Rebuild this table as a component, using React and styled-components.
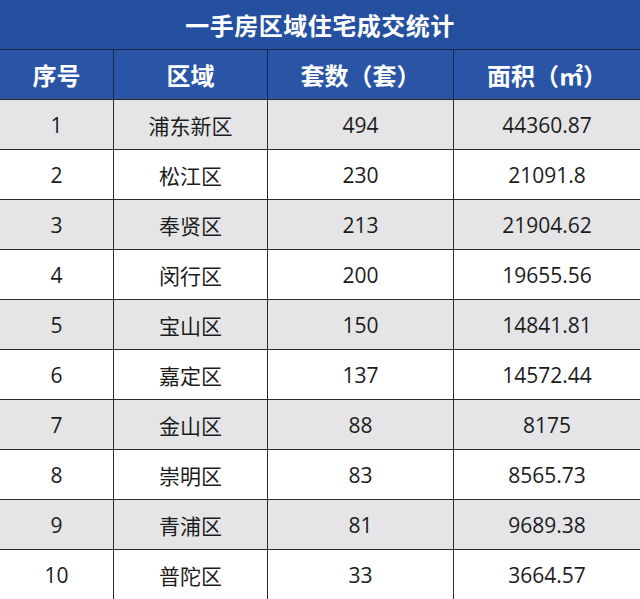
import React from 'react'
import styled, { createGlobalStyle } from 'styled-components'

const Global = createGlobalStyle`
  body {
    margin: 0;
    background: #fff;
    font-family: "Open Sans", "Noto Sans CJK SC", sans-serif;
  }
`

const Sheet = styled.section`
  width: 640px;
  height: 599px;
  overflow: hidden;
`

const Title = styled.h1`
  margin: 0;
  height: 49px;
  display: flex;
  align-items: center;
  justify-content: center;
  background: #2550a0;
  color: #fff;
  font-family: "Noto Sans CJK SC", sans-serif;
  font-size: 24px;
  font-weight: 700;
  letter-spacing: 0.5px;
`

const Row = styled.div`
  display: grid;
  grid-template-columns: 113px 154px 186px 187px;
  height: 50px;
  box-sizing: border-box;
  border-top: 1px solid ${p => (p.$head ? '#17264a' : '#2b2b2b')};
  background: ${p => (p.$head ? '#2a55a7' : p.$shade ? '#e5e5e7' : '#fff')};
`

const Cell = styled.div`
  display: flex;
  align-items: center;
  justify-content: center;
  box-sizing: border-box;
  border-left: 1px solid ${p => (p.$head ? '#17264a' : '#2b2b2b')};
  &:first-child {
    border-left: none;
  }
  color: ${p => (p.$head ? '#fff' : '#1c1c1c')};
  font-size: ${p => (p.$head ? '24px' : '21px')};
  font-weight: ${p => (p.$head ? 700 : 400)};
  font-family: ${p => (p.$head ? '"Noto Sans CJK SC", sans-serif' : '"Open Sans", "Noto Sans CJK SC", sans-serif')};
`

const rows = [
  ['1', '浦东新区', '494', '44360.87'],
  ['2', '松江区', '230', '21091.8'],
  ['3', '奉贤区', '213', '21904.62'],
  ['4', '闵行区', '200', '19655.56'],
  ['5', '宝山区', '150', '14841.81'],
  ['6', '嘉定区', '137', '14572.44'],
  ['7', '金山区', '88', '8175'],
  ['8', '崇明区', '83', '8565.73'],
  ['9', '青浦区', '81', '9689.38'],
  ['10', '普陀区', '33', '3664.57'],
]

const heads = ['序号', '区域', '套数（套）', '面积（㎡）']

export default function App() {
  return (
    <Sheet>
      <Global />
      <Title>一手房区域住宅成交统计</Title>
      <Row $head>
        {heads.map(h => (
          <Cell $head key={h}>{h}</Cell>
        ))}
      </Row>
      {rows.map((r, i) => (
        <Row key={r[0]} $shade={i % 2 === 0}>
          {r.map((v, j) => (
            <Cell key={j}>{v}</Cell>
          ))}
        </Row>
      ))}
    </Sheet>
  )
}
